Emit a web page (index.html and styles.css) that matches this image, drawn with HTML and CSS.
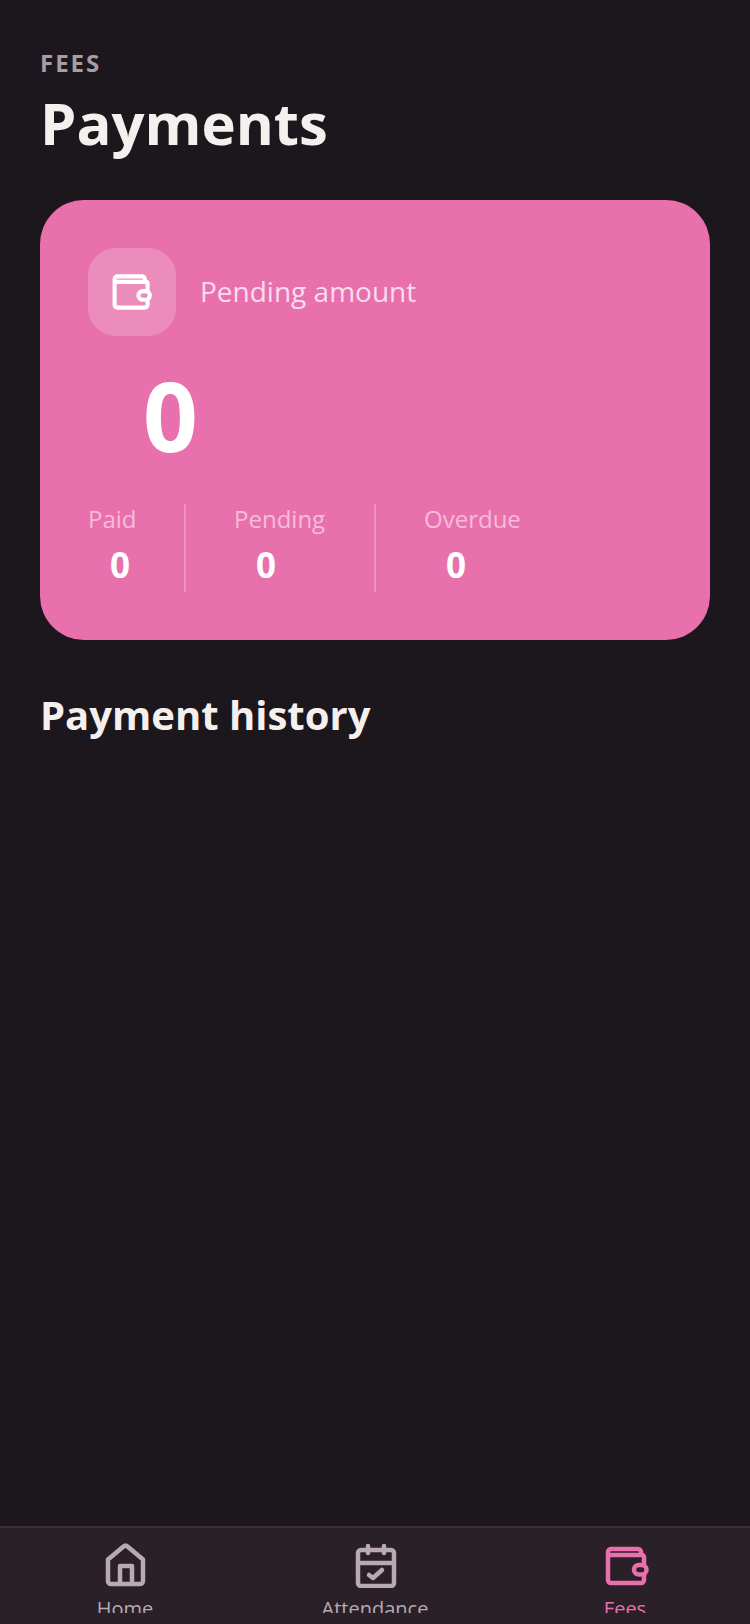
FILE: index.html
```html
<!DOCTYPE html>
<html lang="en">
<head>
    <meta charset="UTF-8">
    <meta name="viewport" content="width=device-width, initial-scale=1.0">
    <title>Payments</title>
    <link rel="stylesheet" href="styles.css">
</head>
<body>
    <main class="content">
        <div class="eyebrow">FEES</div>
        <h1 class="title">Payments</h1>

        <section class="summary-card">
            <div class="summary-head">
                <div class="icon-box">
                    <svg class="icon-wallet" viewBox="2 2 48 48" fill="none" stroke="currentColor" stroke-width="4.5" stroke-linejoin="round" stroke-linecap="round">
                        <path d="M7 12a3 3 0 0 1 3-3h27a3 3 0 0 1 3 3v3h1a2 2 0 0 1 2 2v7M43 35v5a3 3 0 0 1-3 3H10a3 3 0 0 1-3-3V12M7 15h33"/>
                        <rect x="33" y="25" width="12.5" height="9.5" rx="4.75"/>
                    </svg>
                </div>
                <div class="summary-label">Pending amount</div>
            </div>
            <div class="summary-value">0</div>
            <div class="stats">
                <div class="stat stat-paid">
                    <div class="stat-label">Paid</div>
                    <div class="stat-value">0</div>
                </div>
                <div class="stat stat-pending">
                    <div class="stat-label">Pending</div>
                    <div class="stat-value">0</div>
                </div>
                <div class="stat stat-overdue">
                    <div class="stat-label">Overdue</div>
                    <div class="stat-value">0</div>
                </div>
            </div>
        </section>

        <h2 class="section-title">Payment history</h2>
    </main>

    <nav class="tabbar">
        <div class="tab">
            <svg class="tab-icon" viewBox="0 0 48 48" fill="none" stroke="currentColor" stroke-width="4.5" stroke-linejoin="round" stroke-linecap="round">
                <path d="M7 19.5 22.5 6.5a3 3 0 0 1 4 0L42 19.5V41a3 3 0 0 1-3 3H10a3 3 0 0 1-3-3z"/>
                <path d="M19 44V26h12v18"/>
            </svg>
            <span class="tab-label">Home</span>
        </div>
        <div class="tab">
            <svg class="tab-icon" viewBox="0 0 48 48" fill="none" stroke="currentColor" stroke-width="4.5" stroke-linejoin="round" stroke-linecap="round">
                <rect x="7" y="10" width="36" height="36" rx="3"/>
                <path d="M7 23h36M17 6v7M33 6v7"/>
                <path d="m18 35 4 3 9-8"/>
            </svg>
            <span class="tab-label">Attendance</span>
        </div>
        <div class="tab tab-active">
            <svg class="tab-icon" viewBox="0 0 48 48" fill="none" stroke="currentColor" stroke-width="4.5" stroke-linejoin="round" stroke-linecap="round">
                <path d="M7 12a3 3 0 0 1 3-3h27a3 3 0 0 1 3 3v3h1a2 2 0 0 1 2 2v7M43 35v5a3 3 0 0 1-3 3H10a3 3 0 0 1-3-3V12M7 15h33"/>
                <rect x="33" y="25" width="12.5" height="9.5" rx="4.75"/>
            </svg>
            <span class="tab-label">Fees</span>
        </div>
    </nav>
</body>
</html>
```

FILE: styles.css
```css
* {
    box-sizing: border-box;
}

html, body {
    height: 100%;
}

body {
    margin: 0;
    display: flex;
    flex-direction: column;
    height: 1624px;
    overflow: hidden;
    background-color: #1c171d;
    font-family: 'Open Sans', sans-serif;
    color: #f5f0ee;
}

.content {
    flex: 1;
    padding: 48px 40px 0;
}

.eyebrow {
    font-size: 24px;
    line-height: 30px;
    font-weight: 700;
    letter-spacing: 2px;
    color: #a89ca5;
}

.title {
    margin: 0;
    font-size: 58px;
    line-height: 90px;
    font-weight: 700;
}

.summary-card {
    height: 440px;
    margin-top: 32px;
    padding: 48px;
    border-radius: 44px;
    background-color: #e870ad;
    color: #fff;
}

.summary-head {
    display: flex;
    align-items: center;
    gap: 24px;
}

.icon-box {
    display: flex;
    justify-content: center;
    align-items: center;
    width: 88px;
    height: 88px;
    border-radius: 28px;
    background-color: rgba(255, 255, 255, 0.2);
}

.icon-wallet {
    width: 44px;
    height: 44px;
}

.summary-label {
    padding-bottom: 2px;
    font-size: 28px;
    color: #fbdcec;
}

.summary-value {
    margin-top: 12px;
    padding-left: 55px;
    font-size: 96px;
    line-height: 134px;
    font-weight: 700;
}

.stats {
    display: flex;
    margin-top: 22px;
}

.stat {
    height: 88px;
}

.stat-paid {
    width: 98px;
    border-right: 2px solid rgba(255, 255, 255, 0.25);
}

.stat-pending {
    width: 190px;
    padding-left: 48px;
    border-right: 2px solid rgba(255, 255, 255, 0.25);
}

.stat-overdue {
    padding-left: 48px;
}

.stat-label {
    font-size: 24px;
    line-height: 30px;
    color: #f7bcd9;
}

.stat-value {
    margin-top: 11px;
    padding-left: 22px;
    font-size: 35px;
    line-height: 40px;
    font-weight: 700;
}

.section-title {
    margin: 47px 0 0;
    font-size: 40px;
    line-height: 56px;
    font-weight: 700;
}

.tabbar {
    display: flex;
    height: 98px;
    padding-top: 12px;
    border-top: 2px solid #3a3038;
    background-color: #2a2028;
}

.tab {
    flex: 1;
    display: flex;
    flex-direction: column;
    align-items: center;
    height: 73px;
    overflow: hidden;
    color: #b8a9b2;
}

.tab-active {
    color: #e870ad;
}

.tab-icon {
    flex-shrink: 0;
    width: 48px;
    height: 48px;
}

.tab-label {
    margin-top: 7px;
    font-size: 20px;
    line-height: 28px;
}
```
